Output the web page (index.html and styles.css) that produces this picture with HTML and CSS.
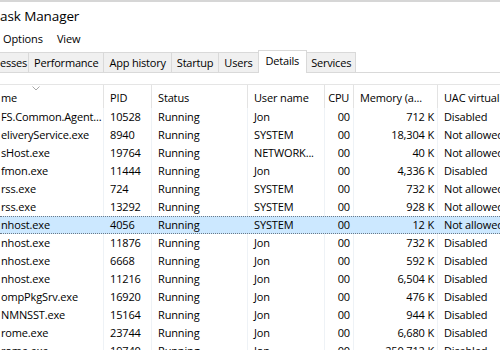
FILE: index.html
```html
<!DOCTYPE html>
<html>
<head>
<meta charset="utf-8">
<link rel="stylesheet" href="styles.css">
</head>
<body>
<div class="tm">
  <div class="title">ask Manager</div>
  <div class="menu"><span class="mi">Options</span><span class="mi">View</span></div>
  <div class="tabs">
    <div class="tab first">esses</div>
    <div class="tab">Performance</div>
    <div class="tab">App history</div>
    <div class="tab">Startup</div>
    <div class="tab">Users</div>
    <div class="tab active">Details</div>
    <div class="tab">Services</div>
  </div>
  <div class="panel">
    <div class="row head">
      <div class="c name">me<svg class="sort" width="8" height="5" viewBox="0 0 8 5"><path d="M0.5 0.5 L4 4 L7.5 0.5" fill="none" stroke="#a8a8a8" stroke-width="1"/></svg></div>
      <div class="c">PID</div>
      <div class="c">Status</div>
      <div class="c">User name</div>
      <div class="c num">CPU</div>
      <div class="c">Memory (a...</div>
      <div class="c">UAC virtualization</div>
    </div>
    <div class="row"><div class="c name">FS.Common.Agent...</div><div class="c">10528</div><div class="c">Running</div><div class="c">Jon</div><div class="c num">00</div><div class="c num">712 K</div><div class="c">Disabled</div></div>
    <div class="row"><div class="c name">eliveryService.exe</div><div class="c">8940</div><div class="c">Running</div><div class="c">SYSTEM</div><div class="c num">00</div><div class="c num">18,304 K</div><div class="c">Not allowed</div></div>
    <div class="row"><div class="c name">sHost.exe</div><div class="c">19764</div><div class="c">Running</div><div class="c">NETWORK...</div><div class="c num">00</div><div class="c num">40 K</div><div class="c">Not allowed</div></div>
    <div class="row"><div class="c name">fmon.exe</div><div class="c">11444</div><div class="c">Running</div><div class="c">Jon</div><div class="c num">00</div><div class="c num">4,336 K</div><div class="c">Disabled</div></div>
    <div class="row"><div class="c name">rss.exe</div><div class="c">724</div><div class="c">Running</div><div class="c">SYSTEM</div><div class="c num">00</div><div class="c num">732 K</div><div class="c">Not allowed</div></div>
    <div class="row"><div class="c name">rss.exe</div><div class="c">13292</div><div class="c">Running</div><div class="c">SYSTEM</div><div class="c num">00</div><div class="c num">928 K</div><div class="c">Not allowed</div></div>
    <div class="row sel"><div class="c name">nhost.exe</div><div class="c">4056</div><div class="c">Running</div><div class="c">SYSTEM</div><div class="c num">00</div><div class="c num">12 K</div><div class="c">Not allowed</div></div>
    <div class="row"><div class="c name">nhost.exe</div><div class="c">11876</div><div class="c">Running</div><div class="c">Jon</div><div class="c num">00</div><div class="c num">732 K</div><div class="c">Disabled</div></div>
    <div class="row"><div class="c name">nhost.exe</div><div class="c">6668</div><div class="c">Running</div><div class="c">Jon</div><div class="c num">00</div><div class="c num">592 K</div><div class="c">Disabled</div></div>
    <div class="row"><div class="c name">nhost.exe</div><div class="c">11216</div><div class="c">Running</div><div class="c">Jon</div><div class="c num">00</div><div class="c num">6,504 K</div><div class="c">Disabled</div></div>
    <div class="row"><div class="c name">ompPkgSrv.exe</div><div class="c">16920</div><div class="c">Running</div><div class="c">Jon</div><div class="c num">00</div><div class="c num">476 K</div><div class="c">Disabled</div></div>
    <div class="row"><div class="c name">NMNSST.exe</div><div class="c">15164</div><div class="c">Running</div><div class="c">Jon</div><div class="c num">00</div><div class="c num">944 K</div><div class="c">Disabled</div></div>
    <div class="row"><div class="c name">rome.exe</div><div class="c">23744</div><div class="c">Running</div><div class="c">Jon</div><div class="c num">00</div><div class="c num">6,680 K</div><div class="c">Disabled</div></div>
    <div class="row"><div class="c name">rome.exe</div><div class="c">19740</div><div class="c">Running</div><div class="c">Jon</div><div class="c num">00</div><div class="c num">250,712 K</div><div class="c">Disabled</div></div>
  </div>
</div>
</body>
</html>
```
FILE: styles.css
```css
html, body {
  margin: 0;
  padding: 0;
  background: #ffffff;
}
body {
  width: 500px;
  height: 350px;
  overflow: hidden;
  font-family: "Open Sans", "Noto Sans", sans-serif;
  font-size: 11px;
  color: #000;
}
.tm {
  border-top: 2px solid #d6d6d6;
  width: 600px;
}
.title {
  height: 26px;
  line-height: 28px;
  font-size: 13.5px;
  letter-spacing: -0.1px;
  color: #000;
}
.menu {
  display: flex;
  gap: 14px;
  height: 22px;
  line-height: 22px;
  padding-left: 3px;
  font-size: 11px;
  letter-spacing: -0.1px;
}
.tabs {
  display: flex;
  align-items: flex-end;
  height: 23px;
  border-bottom: 1px solid #d9d9d9;
  box-sizing: border-box;
}
.tab {
  height: 20px;
  line-height: 19px;
  padding: 0 5px;
  background: #f0f0f0;
  border: 1px solid #d9d9d9;
  border-bottom: none;
  border-left: none;
  box-sizing: border-box;
  font-size: 11px;
  letter-spacing: -0.2px;
}
.tab.first {
  padding-left: 0;
  width: 29px;
  text-align: right;
}
.tab.active {
  background: #fff;
  height: 23px;
  margin-bottom: -1px;
  line-height: 20px;
  border-left: 1px solid #d9d9d9;
  margin-left: -1px;
  padding: 0 7px;
}
.tab:last-child {
  padding: 0 4px;
}
.panel {
  padding-top: 11px;
}
.row {
  display: grid;
  grid-template-columns: 104px 48px 96px 77px 29px 84px 150px;
  height: 18px;
  line-height: 18px;
  box-sizing: border-box;
  letter-spacing: -0.15px;
}
.row.head {
  height: 24px;
  line-height: 25px;
  border-top: 1px solid #e5e5e5;
}
.c {
  padding: 0 6px;
  white-space: nowrap;
  overflow: hidden;
  border-right: 1px solid #eef2f6;
}
.head .c {
  border-right-color: #e3e3e3;
}
.c.name {
  padding-left: 1px;
  position: relative;
}
.c.num {
  text-align: right;
  padding-right: 3px;
}
.head .c.num {
  padding: 0 4px 0 0;
  letter-spacing: -0.3px;
}
.sort {
  position: absolute;
  left: 32px;
  top: 1px;
}
.row.sel {
  background: #cce8ff;
  border-top: 1px dotted #6c7a88;
  border-bottom: 1px dotted #6c7a88;
  line-height: 16px;
}
.row.sel .c {
  border-right-color: #cce8ff;
}
```
